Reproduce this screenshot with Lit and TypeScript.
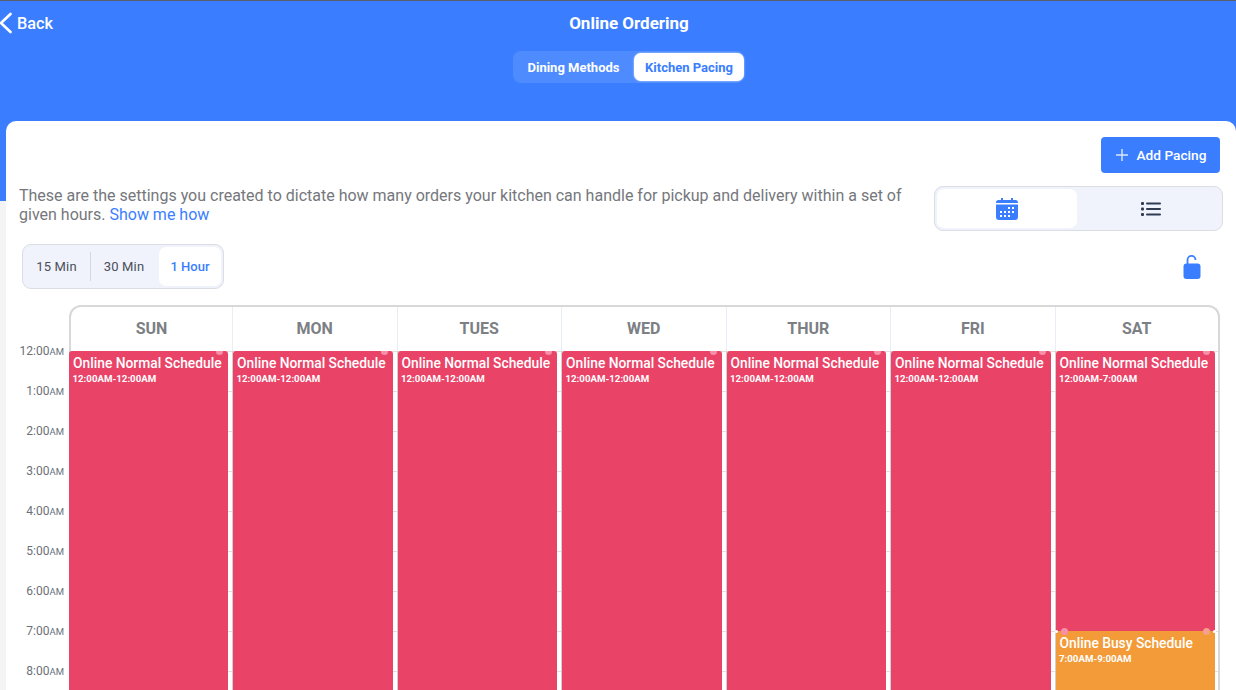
import { LitElement, html, css, svg } from "lit";
import { customElement } from "lit/decorators.js";

const DAYS: { name: string; ev: { t: string; s: string; top: number; h: number; c: string }[] }[] = [
  "SUN", "MON", "TUES", "WED", "THUR", "FRI",
].map((name) => ({
  name,
  ev: [{ t: "Online Normal Schedule", s: "12:00AM-12:00AM", top: 0, h: 400, c: "normal" }],
}));
DAYS.push({
  name: "SAT",
  ev: [
    { t: "Online Normal Schedule", s: "12:00AM-7:00AM", top: 0, h: 280, c: "normal" },
    { t: "Online Busy Schedule", s: "7:00AM-9:00AM", top: 280, h: 80, c: "busy" },
  ],
});
const HOURS = ["12:00", "1:00", "2:00", "3:00", "4:00", "5:00", "6:00", "7:00", "8:00"];

@customElement("app-root")
export class AppRoot extends LitElement {
  static styles = css`
    :host { display: block; width: 1236px; height: 690px; overflow: hidden; position: relative; background: #f4f4f4;
      font-family: Roboto, "Liberation Sans", sans-serif; }
    .hero { height: 200px; background: #3a7eff; border-top: 1px solid #5a5f6a; color: #fff; display: flex; flex-direction: column; align-items: center; }
    .topbar { width: 100%; height: 44px; display: grid; grid-template-columns: 1fr auto 1fr; align-items: center; }
    .back { display: flex; align-items: center; gap: 5px; font-size: 16.3px; font-weight: 500; }
    .title { font-size: 17px; font-weight: 700; position: relative; left: 11px; }
    .seg-top { display: flex; height: 32px; margin-top: 6px; border-radius: 8px; background: #4e8bff; position: relative; left: 10.5px; }
    .seg-top span { font-size: 13px; font-weight: 700; display: flex; align-items: center; justify-content: center; }
    .seg-top .a { width: 121px; }
    .seg-top .b { width: 110px; height: 28px; margin: 2px 0; background: #fff; color: #3a7eff; border-radius: 7px; box-shadow: 0 0 2px rgba(255,255,255,.8); }
    .card { position: absolute; left: 6px; right: 0; top: 121px; bottom: 0; background: #fff; border-radius: 10px 10px 0 0; display: flex; flex-direction: column; }
    .row1 { display: flex; justify-content: flex-end; padding: 16px 16px 0 0; }
    .add { width: 119px; height: 36px; background: #3a7eff; border-radius: 4px; color: #fff; font-size: 13.7px; font-weight: 500; display: flex; align-items: center; justify-content: center; gap: 8px; }
    .row2 { display: flex; justify-content: space-between; padding: 13px 13px 0 13px; }
    .desc { width: 900px; font-size: 16px; line-height: 19px; color: #75777c; }
    .desc a { color: #3a7eff; }
    .view { width: 283px; height: 39px; border: 1px solid #dadde3; border-radius: 9px; background: #f0f3fc; display: flex; padding: 2px; }
    .view div { flex: 1; display: flex; align-items: center; justify-content: center; border-radius: 7px; }
    .view .on { background: #fff; flex: 0 0 140px; }
    .view .list { padding-left: 5px; }
    .row3 { display: flex; justify-content: space-between; align-items: center; padding: 13px 35px 0 16px; }
    .range { display: flex; align-items: center; height: 39px; padding: 2px; border: 1px solid #dadde3; border-radius: 9px; background: #f0f3fc; font-size: 13px; color: #4a4f5a; }
    .range span { display: flex; align-items: center; justify-content: center; height: 100%; box-sizing: border-box; letter-spacing: .2px; }
    .range .m1 { width: 65px; padding-right: 2px; }
    .range .m2 { width: 69px; padding-right: 2px; border-left: 1px solid #d5d8de; height: 29px; }
    .range .on { width: 62px; background: #fff; color: #3a7eff; border-radius: 7px; font-weight: 500; letter-spacing: 0; }
    .cal { display: flex; padding: 16px 16px 0 0; flex: 1; min-height: 0; }
    .hours { width: 63px; flex: none; padding-top: 39px; }
    .hours div { height: 40px; text-align: right; padding-right: 5px; font-size: 12px; color: #6b7078; line-height: 14px; white-space: nowrap; box-sizing: border-box; }
    .hours small { font-size: 9.5px; }
    .grid { flex: 1; min-width: 0; border: 2px solid #d8d8d8; border-bottom: 0; border-radius: 12px 12px 0 0; display: grid; grid-template-columns: 161px repeat(5, 164.5px) 1fr; }
    .col { min-width: 0; }
    .head { height: 44px; box-sizing: border-box; padding-bottom: 2px; display: flex; align-items: center; justify-content: center; font-size: 16px; font-weight: 700; color: #7c7f84; border-left: 1px solid #e9edf5; }
    .body { position: relative; height: 360px; border-left: 1px solid #cfd0d2; background-image: repeating-linear-gradient(to bottom, #e0e0e0 0, #e0e0e0 1px, transparent 1px, transparent 40px); }
    .col:first-child .head, .col:first-child .body { border-left: 0; }
    .ev { position: absolute; left: 0; width: 159.5px; color: #fff; padding: 4px; box-sizing: border-box; }
    .col:first-child .ev { left: -2px; width: 159px; }
    .ev.normal { background: #ea4368; border-radius: 3px 3px 0 0; overflow: hidden; }
    .ev.busy { background: #f29b38; }
    .ev b { display: block; font-size: 13.8px; font-weight: 500; line-height: 16px; white-space: nowrap; }
    .ev i { display: block; font-style: normal; font-size: 9.7px; font-weight: 700; line-height: 14px; margin-top: 1px; margin-left: -.5px; white-space: nowrap; }
    .dot { position: absolute; width: 7px; height: 7px; border-radius: 50%; background: #f590a8; }
    .dot.tr { right: 5px; top: -3px; }
    .dot.tl { left: 5px; top: -3px; }
    .busy .dot.tr { background: #f3a08c; }
    .notch { position: absolute; top: -1px; width: 3px; height: 3px; border-radius: 50%; background: #fff; }
    .notch.l { left: -1px; }
    .notch.r { right: -1px; }
  `;

  render() {
    return html`
      <div class="hero">
        <div class="topbar">
          <div class="back">
            <svg width="12" height="22" viewBox="0 0 12 22" fill="none" stroke="#fff" stroke-width="2.600" stroke-linecap="round" stroke-linejoin="round"><path d="M10.500 2 1 11l9.500 9"/></svg>
            <span>Back</span>
          </div>
          <div class="title">Online Ordering</div>
          <div></div>
        </div>
        <div class="seg-top"><span class="a">Dining Methods</span><span class="b">Kitchen Pacing</span></div>
      </div>
      <div class="card">
        <div class="row1">
          <div class="add">
            <svg width="14" height="14" viewBox="0 0 14 14" stroke="#dbe6ff" stroke-width="1.4"><path d="M7 1v12M1 7h12"/></svg>
            <span>Add Pacing</span>
          </div>
        </div>
        <div class="row2">
          <div class="desc">These are the settings you created to dictate how many orders your kitchen can handle for pickup and delivery within a set of given hours. <a>Show me how</a></div>
          <div class="view">
            <div class="on">
              <svg width="22" height="22" viewBox="0 0 22 22">
                <path fill="#3a7eff" d="M5 0h2v2h8V0h2v2h2.500A2.500 2.500 0 0 1 22 4.500V5H0v-.5A2.500 2.500 0 0 1 2.500 2H5zM0 6.500h22V19a3 3 0 0 1-3 3H3a3 3 0 0 1-3-3z"/>
                ${[[12, 9], [16, 9], [4, 13], [8, 13], [12, 13], [16, 13], [4, 17], [8, 17], [12, 17]].map(
                  ([x, y]) => svg`<rect x=${x} y=${y} width="2" height="2" fill="#fff"/>`
                )}
              </svg>
            </div>
            <div class="list">
              <svg width="20" height="14" viewBox="0 0 20 14" fill="#2f3b52">
                <rect x="0" y="0" width="3" height="3" rx="1"/><rect x="5" y=".5" width="15" height="2" rx="1"/>
                <rect x="0" y="5.500" width="3" height="3" rx="1"/><rect x="5" y="6" width="15" height="2" rx="1"/>
                <rect x="0" y="11" width="3" height="3" rx="1"/><rect x="5" y="11.500" width="15" height="2" rx="1"/>
              </svg>
            </div>
          </div>
        </div>
        <div class="row3">
          <div class="range"><span class="m1">15 Min</span><span class="m2">30 Min</span><span class="on">1 Hour</span></div>
          <svg width="18" height="24" viewBox="0 0 18 24">
            <path fill="none" stroke="#3a7eff" stroke-width="1.800" d="M4.500 9V4.900a4 4 0 0 1 8 0"/>
            <rect x="0.500" y="8.500" width="17" height="15.500" rx="3" fill="#3a7eff"/>
          </svg>
        </div>
        <div class="cal">
          <div class="hours">${HOURS.map((h) => html`<div>${h}<small>AM</small></div>`)}</div>
          <div class="grid">
            ${DAYS.map(
              (d) => html`<div class="col">
                <div class="head">${d.name}</div>
                <div class="body">
                  ${d.ev.map(
                    (e) => html`<div class="ev ${e.c}" style="top:${e.top}px;height:${e.h}px">
                      <span class="dot tr"></span>
                      ${e.c === "busy"
                        ? html`<span class="dot tl"></span><span class="notch l"></span><span class="notch r"></span>`
                        : ""}
                      <b>${e.t}</b><i>${e.s}</i>
                    </div>`
                  )}
                </div>
              </div>`
            )}
          </div>
        </div>
      </div>
    `;
  }
}
